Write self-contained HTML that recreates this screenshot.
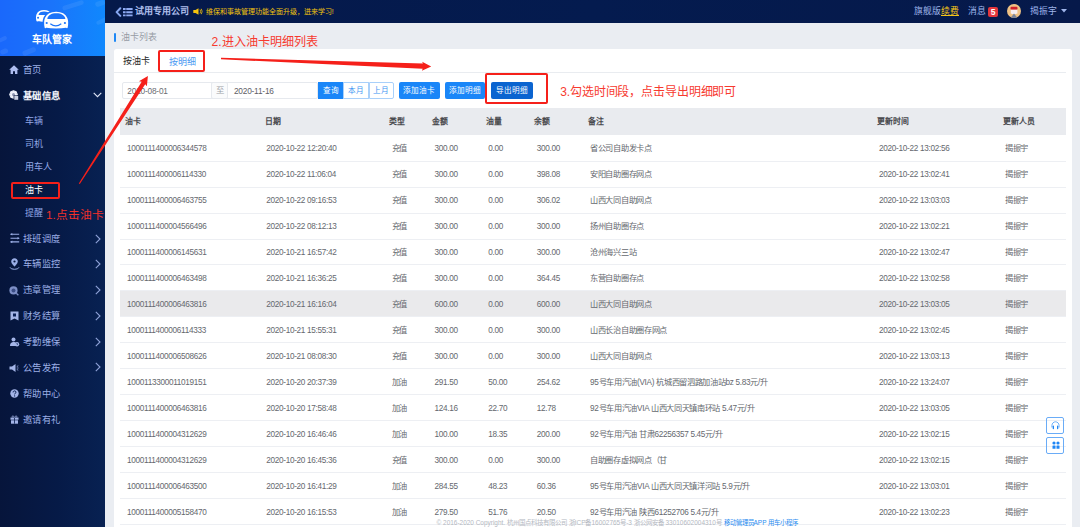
<!DOCTYPE html>
<html lang="zh-CN"><head><meta charset="utf-8">
<style>
*{margin:0;padding:0;box-sizing:border-box}
html,body{width:1080px;height:527px;overflow:hidden;background:#eaedf2;font-family:"Liberation Sans",sans-serif;position:relative}
.a{position:absolute;white-space:nowrap}
#side{position:absolute;left:0;top:0;width:105px;height:527px;background:linear-gradient(90deg,#06153b 0%,#061a47 55%,#082152 100%)}
#logo{position:absolute;left:0;top:0;width:105px;height:56px;background:linear-gradient(90deg,#1a68fb 0%,#1a74fb 50%,#1088fd 100%);overflow:hidden}
#top{position:absolute;left:105px;top:0;width:975px;height:22.5px;background:linear-gradient(90deg,#05194a,#041b4f 50%,#06194a)}
.mi{position:absolute;left:22.6px;font-size:9.3px;letter-spacing:0.5px;color:#9cafe6;line-height:12px;height:12px}
.sub{position:absolute;left:24.5px;font-size:9px;color:#93a8e6;line-height:12px;height:12px}
.chev{position:absolute;left:95px;width:6px;height:10px}
#card{position:absolute;left:113.5px;top:49px;width:958px;height:480px;background:#fff;border-radius:2.5px}
.th{position:absolute;font-size:7.9px;color:#48494d;font-weight:bold;line-height:10px;top:116.5px}
.row{position:absolute;left:120px;width:945.5px;height:25.96px;border-bottom:1px solid #edeff3}
.td{position:absolute;font-size:8.2px;letter-spacing:-0.3px;color:#65686e;line-height:10px;top:8px}
</style></head><body>
<div id="side">
  <div id="logo">
    <svg class="a" style="left:0;top:0" width="105" height="56" viewBox="0 0 105 56">
      <g fill="#ffffff" opacity="0.07">
        <rect x="62" y="3" width="22" height="4.5" rx="2.2" transform="rotate(-18 73 5)"/>
        <rect x="95" y="1" width="10" height="5" rx="2.5" transform="rotate(-18 100 3)"/>
        <rect x="96" y="19" width="12" height="4" rx="2" transform="rotate(-25 102 21)"/>
        <rect x="-2" y="37" width="9" height="4" rx="2" transform="rotate(-25 3 39)"/>
        <rect x="22" y="49" width="14" height="5" rx="2.5" transform="rotate(-22 29 51)"/>
        <rect x="0" y="49" width="8" height="5" rx="2.5" transform="rotate(-20 4 51)"/>
      </g>
      <g transform="translate(8.66,3.17) scale(0.63)">
        <path d="M43.9,27.6 C43.1,24 43.1,20.5 44.3,17.6 C46.2,13.3 50.6,11 56.15,11 C61.7,11 66.1,13.3 68,17.6 C69.2,20.5 69.2,24 68.4,27.6 C68.1,29.1 66.9,29.3 66,28.6 C61.5,29.6 50.8,29.6 46.3,28.6 C45.4,29.3 44.2,29.1 43.9,27.6 Z" fill="#fff"/>
        <path d="M47.3,18.9 C47.8,15 51.5,13.2 56.3,13.2 C61.1,13.2 64.8,15 65.4,18.9 Z" fill="#1c74fa"/>
        <circle cx="46.7" cy="23" r="1.6" fill="#1c74fa"/>
      </g>
      <path d="M43.9,27.6 C43.1,24 43.1,20.5 44.3,17.6 C46.2,13.3 50.6,11 56.15,11 C61.7,11 66.1,13.3 68,17.6 C69.2,20.5 69.2,24 68.4,27.6 C68.1,29.1 66.9,29.3 66,28.6 C61.5,29.6 50.8,29.6 46.3,28.6 C45.4,29.3 44.2,29.1 43.9,27.6 Z" fill="#fff" stroke="#1c74fa" stroke-width="1.5"/>
      <path d="M47.3,18.9 C47.8,15 51.5,13.2 56.3,13.2 C61.1,13.2 64.8,15 65.4,18.9 Z" fill="#1c74fa"/>
      <circle cx="46.7" cy="23" r="1.1" fill="#1c74fa"/>
      <circle cx="64.9" cy="23" r="1.1" fill="#1c74fa"/>
      <path d="M50.3,23.8 Q55.8,28 61.3,23.8" stroke="#1c74fa" stroke-width="1.15" fill="none"/>
    </svg>
    <div class="a" style="left:32.2px;top:34.2px;font-size:9.9px;line-height:12px;color:#fff;font-weight:bold">车队管家</div>
  </div>
  <!-- menu -->
  <svg class="a" style="left:9px;top:64.8px" width="10" height="9.5" viewBox="0 0 10 9.5"><path d="M5,0.3 L9.8,4.8 L8.4,4.8 L8.4,9.2 L6,9.2 L6,6.3 L4,6.3 L4,9.2 L1.6,9.2 L1.6,4.8 L0.2,4.8 Z" fill="#aebdf0"/></svg>
  <div class="mi" style="top:63.6px">首页</div>
  <svg class="a" style="left:9.2px;top:90.2px" width="10" height="10" viewBox="0 0 10 10"><path d="M8.79,3.54 L8.79,5.46 L7.63,5.82 L7.65,5.78 L8.22,6.86 L6.86,8.22 L5.78,7.65 L5.82,7.63 L5.46,8.79 L3.54,8.79 L3.18,7.63 L3.22,7.65 L2.14,8.22 L0.78,6.86 L1.35,5.78 L1.37,5.82 L0.21,5.46 L0.21,3.54 L1.37,3.18 L1.35,3.22 L0.78,2.14 L2.14,0.78 L3.22,1.35 L3.18,1.37 L3.54,0.21 L5.46,0.21 L5.82,1.37 L5.78,1.35 L6.86,0.78 L8.22,2.14 L7.65,3.22 L7.63,3.18Z" fill="#eef1fb"/><circle cx="4.5" cy="4.6" r="1.5" fill="#8e96b4"/><rect x="4.6" y="5.4" width="4.8" height="4.4" fill="#06153b"/><rect x="5.3" y="6" width="3.9" height="3.8" fill="#c9cfe2"/></svg>
  <div class="mi" style="top:89.5px;color:#f4f6fd;font-weight:bold">基础信息</div>
  <svg class="a" style="left:93px;top:92px" width="9" height="6" viewBox="0 0 9 6"><path d="M0.7,0.8 L4.5,4.6 L8.3,0.8" stroke="#dfe6f8" stroke-width="1.1" fill="none"/></svg>
  <div class="sub" style="top:115px">车辆</div>
  <div class="sub" style="top:138px">司机</div>
  <div class="sub" style="top:161px">用车人</div>
  <div class="sub" style="top:184px;color:#fff">油卡</div>
  <div class="sub" style="top:206.7px">提醒</div>
  <!-- collapsed groups -->
  <svg class="a" style="left:9.5px;top:233.2px" width="10" height="10" viewBox="0 0 10 10"><path d="M0.5,1.3 H9.2 M0.5,5.2 H9.2 M0.5,8.9 H9.2" stroke="#9aaee6" stroke-width="1.1"/><path d="M0.3,1.3 L2.3,0 V2.6Z M9.5,5.2 L7.5,3.9 V6.5Z M0.3,8.9 L2.3,7.6 V10.2Z" fill="#9aaee6"/></svg>
  <div class="mi" style="top:232.5px">排班调度</div>
  <svg class="a" style="left:9px;top:258.4px" width="11" height="12" viewBox="0 0 11 12"><path d="M5.5,0.3 C3.6,0.3 2.2,1.7 2.2,3.5 C2.2,5.6 5.5,8.6 5.5,8.6 C5.5,8.6 8.8,5.6 8.8,3.5 C8.8,1.7 7.4,0.3 5.5,0.3 Z" fill="#9aaee6"/><circle cx="5.5" cy="3.5" r="1.1" fill="#06173f"/><path d="M1,9.3 Q1.5,11.3 5.5,11.3 Q9.5,11.3 10,9.3" stroke="#9aaee6" stroke-width="1" fill="none"/></svg>
  <div class="mi" style="top:258.1px">车辆监控</div>
  <svg class="a" style="left:9.2px;top:285.8px" width="10" height="10" viewBox="0 0 10 10"><circle cx="4.5" cy="4.4" r="4.1" fill="#7d8fc6"/><circle cx="4.5" cy="4.4" r="2" fill="#3b4d85"/><path d="M7.3,7.2 L9.4,9.3" stroke="#7d8fc6" stroke-width="1.3"/></svg>
  <div class="mi" style="top:283.7px">违章管理</div>
  <svg class="a" style="left:9.5px;top:311px" width="9" height="10" viewBox="0 0 9 10"><path d="M0.5,0.5 H8.5 V9.5 L4.5,7.5 L0.5,9.5 Z" fill="#a4b5e8"/><rect x="3" y="2.5" width="3" height="3" fill="#0a1f55"/></svg>
  <div class="mi" style="top:310px">财务结算</div>
  <svg class="a" style="left:9.5px;top:337px" width="10" height="10" viewBox="0 0 10 10"><circle cx="3.5" cy="2.5" r="2" fill="#a4b5e8"/><path d="M0,9 C0,6 1.5,5 3.5,5 C5,5 6,5.5 6.5,6.5 L6,9 Z" fill="#a4b5e8"/><circle cx="7" cy="7.2" r="2.2" fill="#a4b5e8"/><path d="M7,6 V7.3 H8" stroke="#0a1f55" stroke-width="0.7" fill="none"/></svg>
  <div class="mi" style="top:335.9px">考勤维保</div>
  <svg class="a" style="left:9px;top:363px" width="10" height="10" viewBox="0 0 10 10"><path d="M0.5,3.5 H3 L6.5,1 V9 L3,6.5 H0.5 Z" fill="#a4b5e8"/><path d="M7.8,3.5 L9.3,2.8 M7.8,5 H9.5 M7.8,6.5 L9.3,7.2" stroke="#a4b5e8" stroke-width="0.8"/></svg>
  <div class="mi" style="top:361.8px">公告发布</div>
  <svg class="a" style="left:9.5px;top:389px" width="9" height="9" viewBox="0 0 9 9"><circle cx="4.5" cy="4.5" r="4.2" fill="#a4b5e8"/><path d="M3.1,3.4 C3.1,2.4 3.8,1.9 4.6,1.9 C5.4,1.9 6,2.5 6,3.2 C6,4.2 4.6,4.3 4.6,5.4" stroke="#071d4e" stroke-width="1" fill="none"/><circle cx="4.6" cy="6.9" r="0.6" fill="#071d4e"/></svg>
  <div class="mi" style="top:387.7px">帮助中心</div>
  <svg class="a" style="left:9.5px;top:415px" width="9" height="9" viewBox="0 0 9 9"><rect x="0.5" y="2.5" width="8" height="2.2" fill="#a4b5e8"/><rect x="1" y="5.3" width="7" height="3.4" fill="#a4b5e8"/><path d="M4.5,2.5 V8.7" stroke="#071d4e" stroke-width="0.8"/><path d="M4.5,2.3 C3,0 1.5,1 2.5,2.3 M4.5,2.3 C6,0 7.5,1 6.5,2.3" stroke="#a4b5e8" stroke-width="0.8" fill="none"/></svg>
  <div class="mi" style="top:413.6px">邀请有礼</div>
  <svg class="a chev" style="top:233.5px" viewBox="0 0 6 10"><path d="M0.8,0.8 L5,5 L0.8,9.2" stroke="#8fa2d8" stroke-width="1.1" fill="none"/></svg>
  <svg class="a chev" style="top:259px" viewBox="0 0 6 10"><path d="M0.8,0.8 L5,5 L0.8,9.2" stroke="#8fa2d8" stroke-width="1.1" fill="none"/></svg>
  <svg class="a chev" style="top:284.7px" viewBox="0 0 6 10"><path d="M0.8,0.8 L5,5 L0.8,9.2" stroke="#8fa2d8" stroke-width="1.1" fill="none"/></svg>
  <svg class="a chev" style="top:310.6px" viewBox="0 0 6 10"><path d="M0.8,0.8 L5,5 L0.8,9.2" stroke="#8fa2d8" stroke-width="1.1" fill="none"/></svg>
  <svg class="a chev" style="top:336.5px" viewBox="0 0 6 10"><path d="M0.8,0.8 L5,5 L0.8,9.2" stroke="#8fa2d8" stroke-width="1.1" fill="none"/></svg>
  <svg class="a chev" style="top:362.4px" viewBox="0 0 6 10"><path d="M0.8,0.8 L5,5 L0.8,9.2" stroke="#8fa2d8" stroke-width="1.1" fill="none"/></svg>
</div>

<div id="top">
  <svg class="a" style="left:10px;top:6.5px" width="7" height="10" viewBox="0 0 7 10"><path d="M5.3,1.3 L1.6,5.1 L5.3,8.9" stroke="#86a6f0" stroke-width="2" fill="none" stroke-linecap="round" stroke-linejoin="round"/></svg>
  <svg class="a" style="left:18px;top:6.5px" width="10" height="10" viewBox="0 0 10 10"><path d="M0,2 H9.6 M0,5.3 H9.6 M0,8.4 H9.6" stroke="#8eaaf2" stroke-width="1.9"/><path d="M2.9,0 V10" stroke="#05194a" stroke-width="0.6"/></svg>
  <div class="a" style="left:30px;top:5px;font-size:9px;line-height:12px;color:#b0c0ee;font-weight:bold">试用专用公司</div>
  <svg class="a" style="left:87.5px;top:7.5px" width="10" height="7" viewBox="0 0 10 7"><path d="M0.3,2 H2.5 L5.5,0.2 V6.8 L2.5,5 H0.3 Z" fill="#f4c20d"/><path d="M7,1.5 Q8.3,3.5 7,5.5 M8.3,0.8 Q10,3.5 8.3,6.2" stroke="#f4c20d" stroke-width="0.8" fill="none"/></svg>
  <div class="a" style="left:100.8px;top:7.3px;font-size:7px;line-height:9px;color:#f2c20c;font-weight:500">维保和事故管理功能全面升级，进来学习!</div>
  <div class="a" style="left:809px;top:5.5px;font-size:8.8px;line-height:11px;color:#9fb5ea">旗舰版<span style="color:#f5c518;text-decoration:underline">续费</span></div>
  <div class="a" style="left:863px;top:5.5px;font-size:8.8px;line-height:11px;color:#9fb5ea">消息</div>
  <div class="a" style="left:883.3px;top:7px;width:9.7px;height:9.7px;background:#e3363c;border-radius:2px;color:#fff;font-size:8.5px;line-height:10px;text-align:center;font-weight:bold;font-family:'Liberation Sans',sans-serif">5</div>
  <svg class="a" style="left:901.5px;top:4px" width="14" height="14" viewBox="0 0 14 14">
    <defs><clipPath id="av"><circle cx="7" cy="7" r="7"/></clipPath></defs>
    <g clip-path="url(#av)">
      <rect x="0" y="0" width="14" height="14" fill="#eec184"/>
      <rect x="3.5" y="2.8" width="7" height="3" rx="1" fill="#d0202a"/>
      <path d="M3.8,5.8 H10.4 V9.5 Q7,10.8 3.8,9.5 Z" fill="#f6eef0"/>
      <path d="M7,9.5 L10.5,14 H3.5 Z" fill="#7a8398"/>
    </g>
  </svg>
  <div class="a" style="left:924.7px;top:5.5px;font-size:8.8px;line-height:11px;color:#9fb5ea">揭振宇</div>
  <svg class="a" style="left:955.5px;top:9px" width="6" height="4" viewBox="0 0 6 4"><path d="M0,0 H6 L3,3.5 Z" fill="#9fb5ea"/></svg>
</div>

<!-- breadcrumb -->
<div class="a" style="left:113.6px;top:33.4px;width:2.4px;height:8.7px;background:#1e88f5;border-radius:1px"></div>
<div class="a" style="left:120.6px;top:32.4px;font-size:8.9px;line-height:11px;color:#969ba4">油卡列表</div>

<div id="card"></div>
<!-- tabs -->
<div class="a" style="left:123.2px;top:55px;font-size:9px;line-height:12px;color:#262626">按油卡</div>
<div class="a" style="left:169px;top:55.5px;font-size:9px;line-height:12px;color:#4b9af2">按明细</div>
<div class="a" style="left:113.5px;top:71.6px;width:952px;height:1px;background:#e9ecf0"></div>

<!-- filter -->
<div class="a" style="left:122.2px;top:81.5px;width:196px;height:17.4px;border:1px solid #e6e9ee;background:#fff;border-radius:2px"></div>
<div class="a" style="left:211.4px;top:81.5px;width:17px;height:17.4px;border:1px solid #e6e9ee;background:#fafbfc;color:#9a9ea6;font-size:8.4px;line-height:14.6px;text-align:center;border-radius:2px">至</div>
<div class="a" style="left:127.3px;top:86.1px;font-size:8.3px;letter-spacing:-0.2px;line-height:11px;color:#6a6d73">2020-08-01</div>
<div class="a" style="left:233.9px;top:86.1px;font-size:8.3px;letter-spacing:-0.2px;line-height:11px;color:#5e6066">2020-11-16</div>
<div class="a" style="left:318px;top:81.8px;width:25.3px;height:16.9px;background:#1a86f8;color:#fff;font-size:7.6px;line-height:18.6px;text-align:center">查询</div>
<div class="a" style="left:343.3px;top:81.8px;width:26px;height:16.9px;border:1px solid #a9d0fa;background:#fff;color:#3d95f2;font-size:7.6px;line-height:16.6px;text-align:center">本月</div>
<div class="a" style="left:368.6px;top:81.8px;width:25.6px;height:16.9px;border:1px solid #a9d0fa;background:#fff;color:#3d95f2;font-size:7.6px;line-height:16.6px;text-align:center;border-radius:0 2px 2px 0">上月</div>
<div class="a" style="left:398.7px;top:81.8px;width:41.6px;height:16.9px;background:#1a86f8;color:#fff;font-size:7.6px;line-height:18.6px;text-align:center;border-radius:2px">添加油卡</div>
<div class="a" style="left:444.7px;top:81.8px;width:40.4px;height:16.9px;background:#1a86f8;color:#fff;font-size:7.6px;line-height:18.6px;text-align:center;border-radius:2px">添加明细</div>
<div class="a" style="left:490.9px;top:81.8px;width:41.8px;height:16.9px;background:#0b64d0;color:#fff;font-size:7.6px;line-height:18.6px;text-align:center;border-radius:2px">导出明细</div>

<!-- table header -->
<div class="a" style="left:120px;top:108px;width:945.5px;height:26.5px;background:#e9ebef"></div>
<div class="th" style="left:124.5px">油卡</div>
<div class="th" style="left:264.5px">日期</div>
<div class="th" style="left:389.3px">类型</div>
<div class="th" style="left:432.2px">金额</div>
<div class="th" style="left:486.2px">油量</div>
<div class="th" style="left:534.4px">余额</div>
<div class="th" style="left:588.4px">备注</div>
<div class="th" style="left:876.9px">更新时间</div>
<div class="th" style="left:1002.6px">更新人员</div>

<div id="rows"><div class="row" style="top:135.700px;"></div>
<div class="td a" style="left:127.0px;top:144.200px">1000111400006344578</div>
<div class="td a" style="left:266.2px;top:144.200px">2020-10-22 12:20:40</div>
<div class="td a" style="left:391.6px;top:144.200px">充值</div>
<div class="td a" style="left:434.4px;top:144.200px">300.00</div>
<div class="td a" style="left:488.2px;top:144.200px">0.00</div>
<div class="td a" style="left:536.7px;top:144.200px">300.00</div>
<div class="td a" style="left:590.0px;top:144.200px">省公司自助发卡点</div>
<div class="td a" style="left:879.1px;top:144.200px">2020-10-22 13:02:56</div>
<div class="td a" style="left:1004.9px;top:144.200px">揭振宇</div>
<div class="row" style="top:161.660px;"></div>
<div class="td a" style="left:127.0px;top:170.160px">1000111400006114330</div>
<div class="td a" style="left:266.2px;top:170.160px">2020-10-22 11:06:04</div>
<div class="td a" style="left:391.6px;top:170.160px">充值</div>
<div class="td a" style="left:434.4px;top:170.160px">300.00</div>
<div class="td a" style="left:488.2px;top:170.160px">0.00</div>
<div class="td a" style="left:536.7px;top:170.160px">398.08</div>
<div class="td a" style="left:590.0px;top:170.160px">安阳自助圈存网点</div>
<div class="td a" style="left:879.1px;top:170.160px">2020-10-22 13:02:41</div>
<div class="td a" style="left:1004.9px;top:170.160px">揭振宇</div>
<div class="row" style="top:187.620px;"></div>
<div class="td a" style="left:127.0px;top:196.120px">1000111400006463755</div>
<div class="td a" style="left:266.2px;top:196.120px">2020-10-22 09:16:53</div>
<div class="td a" style="left:391.6px;top:196.120px">充值</div>
<div class="td a" style="left:434.4px;top:196.120px">300.00</div>
<div class="td a" style="left:488.2px;top:196.120px">0.00</div>
<div class="td a" style="left:536.7px;top:196.120px">306.02</div>
<div class="td a" style="left:590.0px;top:196.120px">山西大同自助网点</div>
<div class="td a" style="left:879.1px;top:196.120px">2020-10-22 13:03:03</div>
<div class="td a" style="left:1004.9px;top:196.120px">揭振宇</div>
<div class="row" style="top:213.580px;"></div>
<div class="td a" style="left:127.0px;top:222.080px">1000111400004566496</div>
<div class="td a" style="left:266.2px;top:222.080px">2020-10-22 08:12:13</div>
<div class="td a" style="left:391.6px;top:222.080px">充值</div>
<div class="td a" style="left:434.4px;top:222.080px">300.00</div>
<div class="td a" style="left:488.2px;top:222.080px">0.00</div>
<div class="td a" style="left:536.7px;top:222.080px">300.00</div>
<div class="td a" style="left:590.0px;top:222.080px">扬州自助圈存点</div>
<div class="td a" style="left:879.1px;top:222.080px">2020-10-22 13:02:21</div>
<div class="td a" style="left:1004.9px;top:222.080px">揭振宇</div>
<div class="row" style="top:239.540px;"></div>
<div class="td a" style="left:127.0px;top:248.040px">1000111400006145631</div>
<div class="td a" style="left:266.2px;top:248.040px">2020-10-21 16:57:42</div>
<div class="td a" style="left:391.6px;top:248.040px">充值</div>
<div class="td a" style="left:434.4px;top:248.040px">300.00</div>
<div class="td a" style="left:488.2px;top:248.040px">0.00</div>
<div class="td a" style="left:536.7px;top:248.040px">300.00</div>
<div class="td a" style="left:590.0px;top:248.040px">沧州海兴三站</div>
<div class="td a" style="left:879.1px;top:248.040px">2020-10-22 13:02:47</div>
<div class="td a" style="left:1004.9px;top:248.040px">揭振宇</div>
<div class="row" style="top:265.500px;"></div>
<div class="td a" style="left:127.0px;top:274.000px">1000111400006463498</div>
<div class="td a" style="left:266.2px;top:274.000px">2020-10-21 16:36:25</div>
<div class="td a" style="left:391.6px;top:274.000px">充值</div>
<div class="td a" style="left:434.4px;top:274.000px">300.00</div>
<div class="td a" style="left:488.2px;top:274.000px">0.00</div>
<div class="td a" style="left:536.7px;top:274.000px">364.45</div>
<div class="td a" style="left:590.0px;top:274.000px">东营自助圈存点</div>
<div class="td a" style="left:879.1px;top:274.000px">2020-10-22 13:02:58</div>
<div class="td a" style="left:1004.9px;top:274.000px">揭振宇</div>
<div class="row" style="top:291.460px;background:#eaeaec;"></div>
<div class="td a" style="left:127.0px;top:299.960px">1000111400006463816</div>
<div class="td a" style="left:266.2px;top:299.960px">2020-10-21 16:16:04</div>
<div class="td a" style="left:391.6px;top:299.960px">充值</div>
<div class="td a" style="left:434.4px;top:299.960px">600.00</div>
<div class="td a" style="left:488.2px;top:299.960px">0.00</div>
<div class="td a" style="left:536.7px;top:299.960px">600.00</div>
<div class="td a" style="left:590.0px;top:299.960px">山西大同自助网点</div>
<div class="td a" style="left:879.1px;top:299.960px">2020-10-22 13:03:05</div>
<div class="td a" style="left:1004.9px;top:299.960px">揭振宇</div>
<div class="row" style="top:317.420px;"></div>
<div class="td a" style="left:127.0px;top:325.920px">1000111400006114333</div>
<div class="td a" style="left:266.2px;top:325.920px">2020-10-21 15:55:31</div>
<div class="td a" style="left:391.6px;top:325.920px">充值</div>
<div class="td a" style="left:434.4px;top:325.920px">300.00</div>
<div class="td a" style="left:488.2px;top:325.920px">0.00</div>
<div class="td a" style="left:536.7px;top:325.920px">300.00</div>
<div class="td a" style="left:590.0px;top:325.920px">山西长治自助圈存网点</div>
<div class="td a" style="left:879.1px;top:325.920px">2020-10-22 13:02:45</div>
<div class="td a" style="left:1004.9px;top:325.920px">揭振宇</div>
<div class="row" style="top:343.380px;"></div>
<div class="td a" style="left:127.0px;top:351.880px">1000111400006508626</div>
<div class="td a" style="left:266.2px;top:351.880px">2020-10-21 08:08:30</div>
<div class="td a" style="left:391.6px;top:351.880px">充值</div>
<div class="td a" style="left:434.4px;top:351.880px">300.00</div>
<div class="td a" style="left:488.2px;top:351.880px">0.00</div>
<div class="td a" style="left:536.7px;top:351.880px">300.00</div>
<div class="td a" style="left:590.0px;top:351.880px">山西大同自助网点</div>
<div class="td a" style="left:879.1px;top:351.880px">2020-10-22 13:03:13</div>
<div class="td a" style="left:1004.9px;top:351.880px">揭振宇</div>
<div class="row" style="top:369.340px;"></div>
<div class="td a" style="left:127.0px;top:377.840px">1000113300011019151</div>
<div class="td a" style="left:266.2px;top:377.840px">2020-10-20 20:37:39</div>
<div class="td a" style="left:391.6px;top:377.840px">加油</div>
<div class="td a" style="left:434.4px;top:377.840px">291.50</div>
<div class="td a" style="left:488.2px;top:377.840px">50.00</div>
<div class="td a" style="left:536.7px;top:377.840px">254.62</div>
<div class="td a" style="left:590.0px;top:377.840px">95号车用汽油(VIA) 杭城西留泗路加油站bz 5.83元/升</div>
<div class="td a" style="left:879.1px;top:377.840px">2020-10-22 13:24:07</div>
<div class="td a" style="left:1004.9px;top:377.840px">揭振宇</div>
<div class="row" style="top:395.300px;"></div>
<div class="td a" style="left:127.0px;top:403.800px">1000111400006463816</div>
<div class="td a" style="left:266.2px;top:403.800px">2020-10-20 17:58:48</div>
<div class="td a" style="left:391.6px;top:403.800px">加油</div>
<div class="td a" style="left:434.4px;top:403.800px">124.16</div>
<div class="td a" style="left:488.2px;top:403.800px">22.70</div>
<div class="td a" style="left:536.7px;top:403.800px">12.78</div>
<div class="td a" style="left:590.0px;top:403.800px">92号车用汽油VIA 山西大同天镇南环站 5.47元/升</div>
<div class="td a" style="left:879.1px;top:403.800px">2020-10-22 13:03:05</div>
<div class="td a" style="left:1004.9px;top:403.800px">揭振宇</div>
<div class="row" style="top:421.260px;"></div>
<div class="td a" style="left:127.0px;top:429.760px">1000111400004312629</div>
<div class="td a" style="left:266.2px;top:429.760px">2020-10-20 16:46:46</div>
<div class="td a" style="left:391.6px;top:429.760px">加油</div>
<div class="td a" style="left:434.4px;top:429.760px">100.00</div>
<div class="td a" style="left:488.2px;top:429.760px">18.35</div>
<div class="td a" style="left:536.7px;top:429.760px">200.00</div>
<div class="td a" style="left:590.0px;top:429.760px">92号车用汽油 甘肃62256357 5.45元/升</div>
<div class="td a" style="left:879.1px;top:429.760px">2020-10-22 13:02:15</div>
<div class="td a" style="left:1004.9px;top:429.760px">揭振宇</div>
<div class="row" style="top:447.220px;"></div>
<div class="td a" style="left:127.0px;top:455.720px">1000111400004312629</div>
<div class="td a" style="left:266.2px;top:455.720px">2020-10-20 16:45:36</div>
<div class="td a" style="left:391.6px;top:455.720px">充值</div>
<div class="td a" style="left:434.4px;top:455.720px">300.00</div>
<div class="td a" style="left:488.2px;top:455.720px">0.00</div>
<div class="td a" style="left:536.7px;top:455.720px">300.00</div>
<div class="td a" style="left:590.0px;top:455.720px">自助圈存虚拟网点（甘</div>
<div class="td a" style="left:879.1px;top:455.720px">2020-10-22 13:02:15</div>
<div class="td a" style="left:1004.9px;top:455.720px">揭振宇</div>
<div class="row" style="top:473.180px;"></div>
<div class="td a" style="left:127.0px;top:481.680px">1000111400006463500</div>
<div class="td a" style="left:266.2px;top:481.680px">2020-10-20 16:41:29</div>
<div class="td a" style="left:391.6px;top:481.680px">加油</div>
<div class="td a" style="left:434.4px;top:481.680px">284.55</div>
<div class="td a" style="left:488.2px;top:481.680px">48.23</div>
<div class="td a" style="left:536.7px;top:481.680px">60.36</div>
<div class="td a" style="left:590.0px;top:481.680px">95号车用汽油VIA 山西大同天镇洋河站 5.9元/升</div>
<div class="td a" style="left:879.1px;top:481.680px">2020-10-22 13:03:01</div>
<div class="td a" style="left:1004.9px;top:481.680px">揭振宇</div>
<div class="row" style="top:499.140px;"></div>
<div class="td a" style="left:127.0px;top:507.640px">1000111400005158470</div>
<div class="td a" style="left:266.2px;top:507.640px">2020-10-20 16:15:53</div>
<div class="td a" style="left:391.6px;top:507.640px">加油</div>
<div class="td a" style="left:434.4px;top:507.640px">279.50</div>
<div class="td a" style="left:488.2px;top:507.640px">51.76</div>
<div class="td a" style="left:536.7px;top:507.640px">20.50</div>
<div class="td a" style="left:590.0px;top:507.640px">92号车用汽油 陕西61252706 5.4元/升</div>
<div class="td a" style="left:879.1px;top:507.640px">2020-10-22 13:02:23</div>
<div class="td a" style="left:1004.9px;top:507.640px">揭振宇</div></div><!--/rows-->

<!-- float buttons -->
<div class="a" style="left:1046.2px;top:417.1px;width:17.7px;height:17.3px;border:1px solid #6aacf7;border-radius:2px"></div>
<svg class="a" style="left:1050.5px;top:421px" width="9" height="9" viewBox="0 0 9 9"><path d="M0.9,6.5 V4.6 C0.9,2.2 2.7,0.8 4.5,0.8 C6.3,0.8 8.1,2.2 8.1,4.6 V6.5" stroke="#4a9cf6" stroke-width="0.8" fill="none"/><rect x="1.7" y="4.6" width="1.3" height="3.6" rx="0.6" fill="#1f86f5"/><rect x="6" y="4.6" width="1.3" height="3.6" rx="0.6" fill="#1f86f5"/></svg>
<div class="a" style="left:1046.2px;top:436.7px;width:17.7px;height:17.3px;border:1px solid #6aacf7;border-radius:2px"></div>
<svg class="a" style="left:1051.5px;top:441.2px" width="8" height="8.5" viewBox="0 0 8 8.5"><circle cx="2" cy="2" r="1.6" fill="#1f86f5"/><circle cx="6" cy="2" r="1.6" fill="#1f86f5"/><rect x="0.5" y="4.6" width="3" height="3.2" rx="0.3" fill="#1f86f5"/><rect x="4.5" y="4.6" width="3" height="3.2" rx="0.3" fill="#1f86f5"/></svg>

<!-- footer -->
<div class="a" style="left:436.5px;top:518.8px;font-size:6.46px;line-height:8px;color:#b4b8bf">© 2016-2020 Copyright. 杭州国点科技有限公司 浙ICP备16002765号-3 浙公网安备 33010602004310号 <span style="color:#2a8cf0">移动管理员APP 用车小程序</span></div>

<!-- annotations -->
<div class="a" style="left:157.7px;top:49.6px;width:47.2px;height:22.2px;border:2px solid #f5201a;border-radius:2px"></div>
<div class="a" style="left:485.3px;top:73.2px;width:62.9px;height:30.4px;border:2px solid #f5201a;border-radius:2px"></div>
<div class="a" style="left:11.2px;top:181.8px;width:49px;height:17px;border:2px solid #f5201a;border-radius:2px"></div>
<div class="a" style="left:211.6px;top:34.9px;font-size:12.1px;line-height:14px;color:#f73a2f">2.进入油卡明细列表</div>
<div class="a" style="left:560.2px;top:84.8px;font-size:12px;letter-spacing:-0.13px;line-height:14px;color:#f73a2f">3.勾选时间段，点击导出明细即可</div>
<div class="a" style="left:46px;top:207.7px;font-size:11.75px;line-height:14px;color:#f0302a">1.点击油卡</div>
<svg class="a" id="arr" style="left:0;top:0" width="1080" height="527" viewBox="0 0 1080 527"><path d="M79.81,184.12 L145.22,84.13 L146.87,86.37 L147.90,76.00 L138.94,81.32 L141.67,81.87 L78.79,183.48 Z" fill="#f5201a"/><path d="M220.97,59.30 L422.71,68.78 L421.84,70.65 L431.20,66.50 L422.18,61.65 L422.90,63.58 L221.03,57.70 Z" fill="#f5201a"/></svg>
</body></html>
